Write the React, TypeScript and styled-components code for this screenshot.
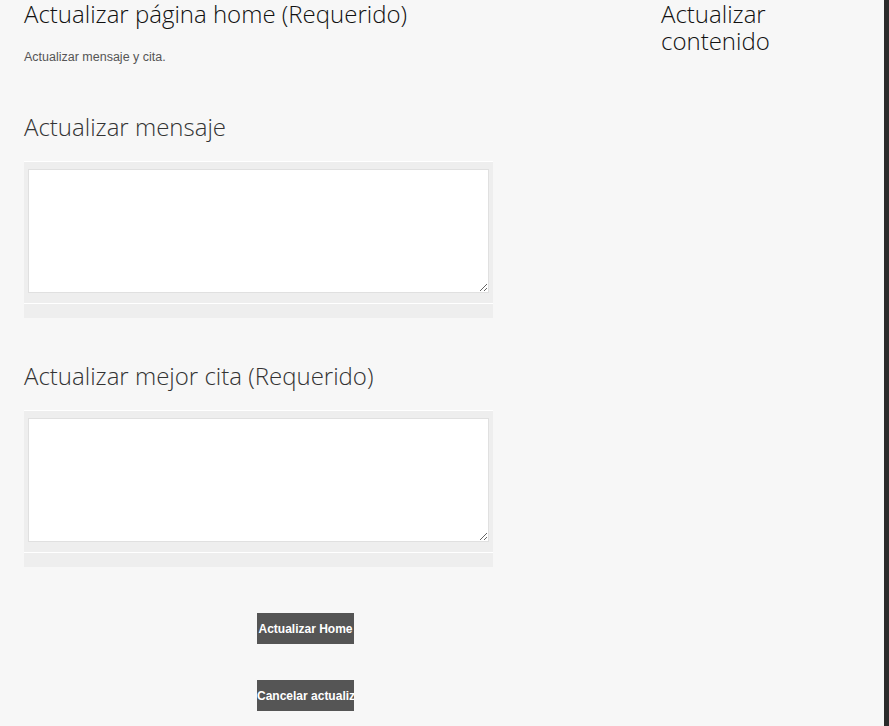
import React from "react";
import styled, { createGlobalStyle } from "styled-components";

const Global = createGlobalStyle`
  html, body { margin: 0; padding: 0; background: #f7f7f7; overflow: hidden; }
  #root { min-height: 726px; }
`;

const Page = styled.div`
  display: flex;
  min-height: 726px;
  background: #f7f7f7;
`;

const Main = styled.div`
  flex: 1;
  display: grid;
  grid-template-columns: 469px 180px;
  column-gap: 168px;
  padding-left: 24px;
  align-items: start;
`;

const Edge = styled.div`
  width: 5px;
  background: #2b2b2b;
`;

const Column = styled.div`
  display: flex;
  flex-direction: column;
`;

const Heading = styled.h2<{ $tone?: "dark" | "mid"; $top?: number }>`
  margin: ${(p) => p.$top ?? 0}px 0 0;
  font-family: "Open Sans", "DejaVu Sans", sans-serif;
  font-weight: 300;
  font-size: 24px;
  line-height: 27px;
  color: ${(p) => (p.$tone === "mid" ? "#333" : "#111")};
`;

const Note = styled.p`
  margin: 23px 0 0;
  font-family: "Liberation Sans", Arial, sans-serif;
  font-size: 12.5px;
  line-height: 14px;
  color: #555;
`;

const FieldBox = styled.div<{ $top: number }>`
  margin-top: ${(p) => p.$top}px;
  display: flex;
  flex-direction: column;
`;

const FieldWrap = styled.div`
  background: #eeeeee;
  border-top: 1px solid #fff;
  padding: 7px 4px 10px;
  display: flex;
`;

const TextArea = styled.textarea`
  box-sizing: border-box;
  width: 461px;
  height: 124px;
  margin: 0;
  border: 1px solid #e0e0e0;
  background: #fff;
  padding: 2px;
  font-family: "Liberation Sans", Arial, sans-serif;
  font-size: 13px;
  outline: none;
`;

const FieldFoot = styled.div`
  height: 14px;
  background: #eeeeee;
  border-top: 1px solid #fff;
`;

const Actions = styled.div`
  display: flex;
  flex-direction: column;
  align-items: flex-start;
  gap: 36px;
  margin-top: 46px;
  padding-left: 233px;
`;

const Button = styled.button`
  display: block;
  box-sizing: border-box;
  width: 97px;
  height: 31px;
  padding: 0;
  border: none;
  background: #555555;
  color: #fff;
  font-family: "Liberation Sans", Arial, sans-serif;
  font-weight: 700;
  font-size: 12px;
  white-space: nowrap;
  overflow: hidden;
  text-align: left;
  cursor: pointer;
`;

const Label = styled.span<{ $center?: boolean }>`
  display: block;
  text-align: ${(p) => (p.$center ? "center" : "left")};
`;

export default function App() {
  return (
    <>
      <Global />
      <Page>
        <Main>
          <Column>
            <Heading>Actualizar página home (Requerido)</Heading>
            <Note>Actualizar mensaje y cita.</Note>
            <Heading $tone="mid" $top={49}>Actualizar mensaje</Heading>
            <FieldBox $top={21}>
              <FieldWrap>
                <TextArea />
              </FieldWrap>
              <FieldFoot />
            </FieldBox>
            <Heading $tone="mid" $top={44}>Actualizar mejor cita (Requerido)</Heading>
            <FieldBox $top={21}>
              <FieldWrap>
                <TextArea />
              </FieldWrap>
              <FieldFoot />
            </FieldBox>
            <Actions>
              <Button>
                <Label $center>Actualizar Home</Label>
              </Button>
              <Button>
                <Label>Cancelar actualización</Label>
              </Button>
            </Actions>
          </Column>
          <Column>
            <Heading>Actualizar contenido</Heading>
          </Column>
        </Main>
        <Edge />
      </Page>
    </>
  );
}
